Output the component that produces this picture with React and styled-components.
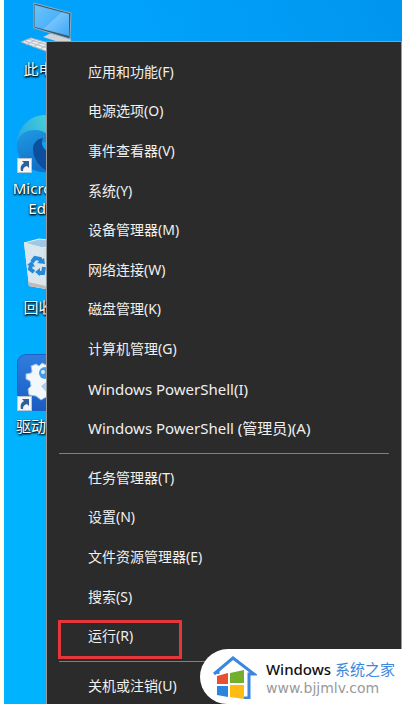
import React from "react";
import styled, { createGlobalStyle } from "styled-components";

const toolItems = [
  { text: "应用和功能(F)" },
  { text: "电源选项(O)" },
  { text: "事件查看器(V)" },
  { text: "系统(Y)" },
  { text: "设备管理器(M)" },
  { text: "网络连接(W)" },
  { text: "磁盘管理(K)" },
  { text: "计算机管理(G)" },
  { text: "Windows PowerShell(I)", large: true },
  { text: "Windows PowerShell (管理员)(A)", large: true },
];

const systemItems = [
  { text: "任务管理器(T)" },
  { text: "设置(N)" },
  { text: "文件资源管理器(E)" },
  { text: "搜索(S)" },
  { text: "运行(R)", highlighted: true },
];

const shortcuts = [
  { label: "此电脑", Icon: ComputerIcon },
  { label: "Microsoft Edge", Icon: EdgeIcon, linked: true },
  { label: "回收站", Icon: RecycleIcon },
  { label: "驱动总裁", Icon: DriverIcon, linked: true },
];

export default function App() {
  return (
    <>
      <GlobalStyle />
      <Desktop>
        <Shortcuts>
          {shortcuts.map(({ label, Icon, linked }) => (
            <Shortcut key={label}>
              <Icon />
              {linked && <LinkArrow />}
              <ShortcutLabel>{label}</ShortcutLabel>
            </Shortcut>
          ))}
        </Shortcuts>
        <Menu>
          <MenuGroup $rows={10}>
            {toolItems.map(({ text, large }) => (
              <MenuItem key={text} $large={large}>
                {text}
              </MenuItem>
            ))}
          </MenuGroup>
          <Divider />
          <MenuGroup $rows={5}>
            {systemItems.map(({ text, highlighted }) => (
              <MenuItem key={text}>
                {text}
                {highlighted && <Highlight />}
              </MenuItem>
            ))}
          </MenuGroup>
          <Divider />
          <MenuGroup $rows={1}>
            <MenuItem>关机或注销(U)</MenuItem>
          </MenuGroup>
        </Menu>
        <Watermark>
          <HouseLogo />
          <div>
            <SiteName>
              Windows <span>系统之家</span>
            </SiteName>
            <SiteUrl>www.bjjmlv.com</SiteUrl>
          </div>
        </Watermark>
      </Desktop>
    </>
  );
}

function ComputerIcon() {
  return (
    <IconSvg viewBox="0 0 58 58">
      <defs>
        <linearGradient id="screen" x1="0" y1="0" x2="1" y2="1">
          <stop offset="0" stopColor="#6cc4fa" />
          <stop offset="0.5" stopColor="#4fb2f8" />
          <stop offset="0.52" stopColor="#74c4fb" />
          <stop offset="1" stopColor="#3fa6f4" />
        </linearGradient>
      </defs>
      <path d="M26 41l8-4 19 4 1 4-9 2z" fill="#cdd5da" />
      <path d="M17 7l37 10-1 26-36-11z" fill="#3d5a6d" stroke="#8fb0c4" strokeWidth="1" />
      <path d="M18 9l34 9v22l-34-9z" fill="url(#screen)" />
      <path d="M4 46l10-4 28 8-8 7z" fill="#e9ecee" stroke="#a8b5bf" strokeWidth="1" />
      <path d="M8 45l26 8M11 43l26 8M9 49l9-5M16 51l9-5M23 53l9-5" stroke="#b5bec5" strokeWidth="1" fill="none" />
    </IconSvg>
  );
}

function EdgeIcon() {
  return (
    <IconSvg viewBox="0 0 58 58">
      <defs>
        <linearGradient id="wave" x1="0" y1="0.5" x2="1" y2="0.2">
          <stop offset="0" stopColor="#27a9e6" />
          <stop offset="0.5" stopColor="#41c8d8" />
          <stop offset="1" stopColor="#54d9a4" />
        </linearGradient>
        <linearGradient id="body" x1="0" y1="0" x2="0.3" y2="1">
          <stop offset="0" stopColor="#1f9be2" />
          <stop offset="1" stopColor="#1170c8" />
        </linearGradient>
      </defs>
      <path d="M0 27C2 10 14 0 29 0c17 0 29 12 29 25 0 9-7 14-15 14H33c6-10-2-22-13-22C10 17 3 20 0 27z" fill="url(#wave)" />
      <path d="M0 29C1 19 10 15 18 15c11 0 16 7 16 14-7-5-17 0-16 10 1 8 6 15 14 18C13 59-1 45 0 29z" fill="url(#body)" />
      <path d="M16 34c0-6 4-10 10-11-3 6 0 12 8 15 6 4 14 4 20 1-5 10-14 17-24 17-8-4-14-13-14-22z" fill="#0d4f9f" />
    </IconSvg>
  );
}

function RecycleIcon() {
  return (
    <IconSvg viewBox="0 0 58 58">
      <path d="M7 9l14 3 30-4-6 42-16 5-17-3z" fill="#d3e1e9" />
      <path d="M7 9L22 5l29 3-25 6z" fill="#9fc8e2" stroke="#e8f2f7" strokeWidth="1" />
      <path d="M7 9l19 5 3 41-17-3z" fill="#d9e6ed" />
      <path d="M11 48l18 4 16-5v3l-16 5-17-3z" fill="#c3b9b6" />
      <g fill="none" stroke="#2489d9" strokeWidth="4">
        <path d="M15 28l3-4 5 1 1 3" />
        <path d="M14 31l-1 4 4 3" />
        <path d="M21 39h5l1-6" />
      </g>
      <path d="M20 29l8 1-1-6zM10 31l5-4 3 6zM23 34v8l-5-4z" fill="#2489d9" />
    </IconSvg>
  );
}

function DriverIcon() {
  return (
    <IconSvg viewBox="0 0 58 58">
      <defs>
        <linearGradient id="tile" x1="0" y1="0" x2="0" y2="1">
          <stop offset="0" stopColor="#2f7ddf" />
          <stop offset="1" stopColor="#1b5cc2" />
        </linearGradient>
      </defs>
      <rect y="1" width="58" height="57" rx="9" fill="#1a62c4" />
      <rect x="1" y="2" width="56" height="55" rx="8" fill="url(#tile)" />
      <path
        d="M9 21l5-1 1-2-1-5 5-2 3 2 3-3 4 2 6-2 4 5-1 4 8 2v8l-5 3 1 8-7 2-4 1-7 4-5-4-7-1-1-6 3-3-1-5-4-2z"
        fill="#f3f8fd"
        stroke="#8fbdf0"
        strokeWidth="1"
      />
      <circle cx="28" cy="20" r="6" fill="#3f9aeb" />
      <circle cx="26" cy="19" r="2" fill="#d5ebfb" />
      <path d="M24 33l5-4 5 4-4 7z" fill="#a5cff4" />
    </IconSvg>
  );
}

function LinkArrow() {
  return (
    <ArrowSvg viewBox="0 0 15 15">
      <rect width="15" height="15" fill="#b8c6d2" />
      <rect x="1" y="1" width="13" height="13" fill="#f4f6f8" />
      <path d="M5 3h7v7l-2-2c-3 1-4 2-4 5H4C3 9 4 7 7 5z" fill="#2d5f9a" />
    </ArrowSvg>
  );
}

function HouseLogo() {
  return (
    <HouseSvg viewBox="0 0 44 44">
      <path d="M1 19L20 3l21 16h-5v24h-5" fill="none" stroke="#3b87e0" strokeWidth="3" />
      <path d="M5 19v-4" stroke="#3b87e0" strokeWidth="3" />
      <path d="M4 21l11-3v11H4z" fill="#e8502f" />
      <path d="M17 18l14-3v13H17z" fill="#72b02c" />
      <path d="M4 31h11v11L4 40z" fill="#2a86dc" />
      <path d="M17 30h14v14l-14-2z" fill="#fdbb13" />
    </HouseSvg>
  );
}

const GlobalStyle = createGlobalStyle`
  * {
    box-sizing: border-box;
  }

  body {
    margin: 0;
    font-family: "Noto Sans", "Noto Sans CJK SC", sans-serif;
  }
`;

const Desktop = styled.main`
  position: relative;
  height: 100vh;
  overflow: hidden;
  border-left: 4px solid #fcfff2;
  background:
    linear-gradient(to right, transparent 30%, rgba(0, 120, 210, 0.3) 100%),
    linear-gradient(to bottom, #00a2fb 0%, #00a8fe 30%, #00b3ff 65%);
`;

const Shortcuts = styled.div`
  width: 84px;
  margin-top: -4px;
  display: grid;
  grid-auto-rows: 119px;
`;

const Shortcut = styled.div`
  position: relative;
  display: flex;
  flex-direction: column;
  align-items: center;
  gap: 5px;
`;

const IconSvg = styled.svg`
  width: 58px;
  height: 58px;
  flex: none;
`;

const ArrowSvg = styled.svg`
  position: absolute;
  top: 43px;
  left: 13px;
  width: 15px;
  height: 15px;
`;

const ShortcutLabel = styled.span`
  width: 76px;
  font-size: 15px;
  line-height: 20px;
  text-align: center;
  color: #ffffff;
  text-shadow: 1px 1px 2px #000000, 0 1px 2px #000000;
`;

const Menu = styled.nav`
  position: absolute;
  top: 41px;
  left: 42px;
  right: 0;
  padding: 10px 12px;
  background-color: #2b2b2b;
  border: 1px solid #999999;
`;

const MenuGroup = styled.div`
  display: grid;
  grid-template-rows: repeat(${(props) => props.$rows}, 1fr);
  min-height: ${(props) => Math.round((props.$rows * 198) / 5)}px;
`;

const MenuItem = styled.button`
  position: relative;
  padding: 0 29px;
  border: 0;
  background: none;
  color: #f0f0f0;
  font-family: inherit;
  font-size: ${(props) => (props.$large ? "15px" : "14px")};
  line-height: 20px;
  text-align: left;
  cursor: pointer;
`;

const Highlight = styled.span`
  position: absolute;
  top: 4px;
  left: -1px;
  width: 124px;
  height: 39px;
  border: 3px solid #e5373a;
`;

const Divider = styled.hr`
  height: 1px;
  margin: 5px 0 4px;
  border: 0;
  background-color: #808080;
`;

const Watermark = styled.footer`
  position: absolute;
  right: 0;
  bottom: 0;
  width: 202px;
  height: 55px;
  padding-left: 13px;
  display: flex;
  align-items: center;
  gap: 9px;
  border-radius: 28px 0 0 27px;
  background-color: #ffffff;
`;

const HouseSvg = styled.svg`
  width: 44px;
  height: 44px;
  flex: none;
`;

const SiteName = styled.div`
  font-size: 15px;
  line-height: 22px;
  font-weight: 500;
  white-space: nowrap;
  color: #111111;

  span {
    font-weight: 400;
    color: #3b87e0;
  }
`;

const SiteUrl = styled.div`
  font-family: "DejaVu Sans", sans-serif;
  font-size: 14px;
  line-height: 16px;
  color: #999999;
`;
